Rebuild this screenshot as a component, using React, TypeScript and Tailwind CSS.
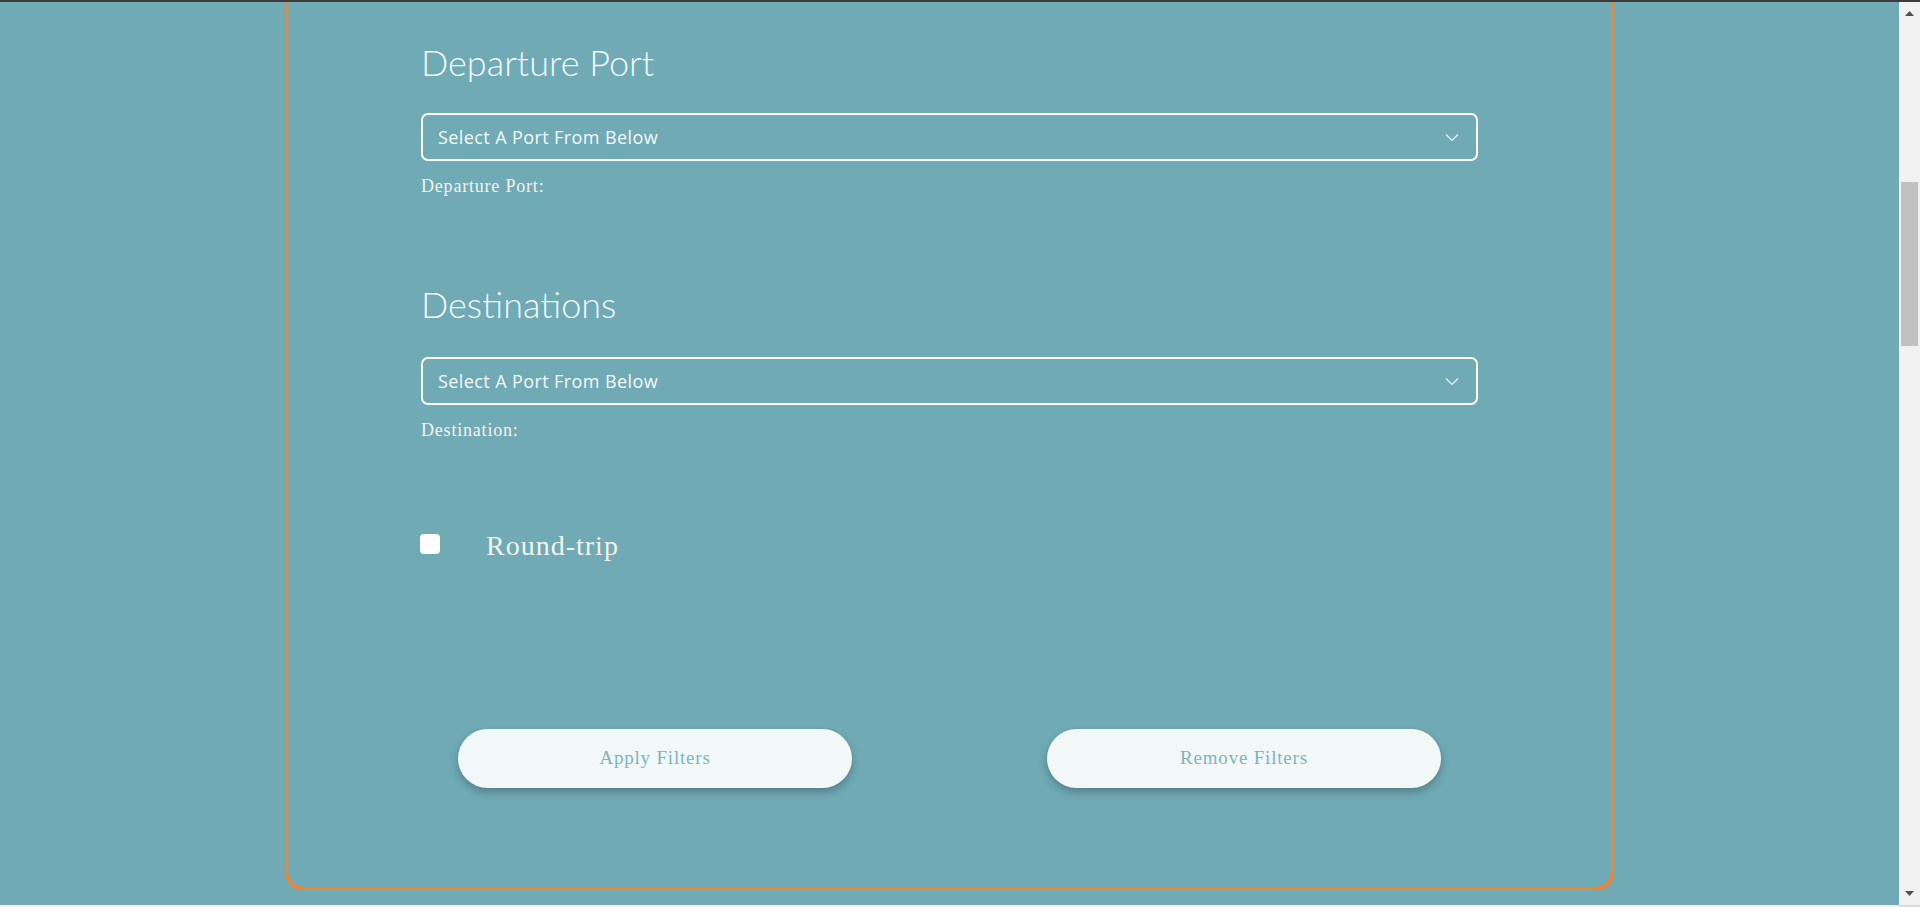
import React from "react";

function Chevron() {
  return (
    <svg width="14" height="9" viewBox="0 0 14 9" fill="none">
      <polyline points="1,1.5 7,7.5 13,1.5" stroke="#e9f3f4" strokeWidth="1.2" fill="none" />
    </svg>
  );
}

function SelectBox() {
  return (
    <div className="flex h-[48px] w-full items-center justify-between rounded-[7px] border-2 border-white pl-[15px] pr-[17px]">
      <span className="text-[18px] leading-[24px] tracking-[0.4px] text-[#f4f9f9]" style={{ fontFamily: '"Open Sans", "Noto Sans", sans-serif' }}>
        Select A Port From Below
      </span>
      <Chevron />
    </div>
  );
}

const headingFont = { fontFamily: 'Lato, "Open Sans", sans-serif' };
const slabFont = { fontFamily: '"Liberation Serif", "DejaVu Serif", serif' };

export default function App() {
  return (
    <div className="flex h-[907px] w-[1920px] flex-col overflow-hidden bg-[#6faab5]">
      <div className="h-[2px] w-full bg-[#3c3c3c]" />
      <div className="flex flex-1">
        <main className="flex flex-1 justify-center">
          <div className="h-[888px] w-[1329px] rounded-b-[18px] border-[3px] border-t-0 border-[#ff7f24] px-[133px]">
            <h2 className="mt-[38px] text-[36px] font-light leading-[44px] text-[#f3f9fa]" style={headingFont}>
              Departure Port
            </h2>
            <div className="mt-[29px]">
              <SelectBox />
            </div>
            <p className="mt-[13px] text-[18px] leading-[24px] tracking-[0.8px] text-[#f5f3ea]" style={slabFont}>
              Departure Port:
            </p>
            <h2 className="mt-[84px] text-[36px] font-light leading-[44px] text-[#f3f9fa]" style={headingFont}>
              Destinations
            </h2>
            <div className="mt-[31px]">
              <SelectBox />
            </div>
            <p className="mt-[13px] text-[18px] leading-[24px] tracking-[0.8px] text-[#f5f3ea]" style={slabFont}>
              Destination:
            </p>
            <div className="mt-[86px] flex items-start">
              <div className="-ml-[1px] mt-[6px] h-[20px] w-[20px] rounded-[4px] bg-white" />
              <span className="ml-[46px] text-[28px] leading-[36px] tracking-[1px] text-[#f5f3ea]" style={slabFont}>
                Round-trip
              </span>
            </div>
            <div className="mt-[165px] flex justify-center gap-[195px]">
              <button className="h-[59px] w-[394px] rounded-full bg-[#f2f8f8] text-[19px] tracking-[0.8px] text-[#7db4be] shadow-[0_4px_8px_rgba(0,0,0,0.25)]" style={slabFont}>
                Apply Filters
              </button>
              <button className="h-[59px] w-[394px] rounded-full bg-[#f2f8f8] text-[19px] tracking-[0.8px] text-[#7db4be] shadow-[0_4px_8px_rgba(0,0,0,0.25)]" style={slabFont}>
                Remove Filters
              </button>
            </div>
          </div>
        </main>
        <div className="flex w-[21px] flex-col items-center bg-[#f1f1f1]">
          <svg className="mt-[9px]" width="9" height="5" viewBox="0 0 9 5">
            <polygon points="0,5 4.5,0 9,5" fill="#505050" />
          </svg>
          <div className="ml-[2px] mt-[166px] h-[164px] w-[17px] self-start bg-[#c1c1c1]" />
          <div className="flex-1" />
          <svg className="mb-[9px]" width="9" height="5" viewBox="0 0 9 5">
            <polygon points="0,0 4.5,5 9,0" fill="#505050" />
          </svg>
        </div>
      </div>
      <div className="flex h-[2px] w-full">
        <div className="flex-1 bg-[#eef2f3]" />
        <div className="w-[21px] bg-[#dcdcdc]" />
      </div>
    </div>
  );
}
